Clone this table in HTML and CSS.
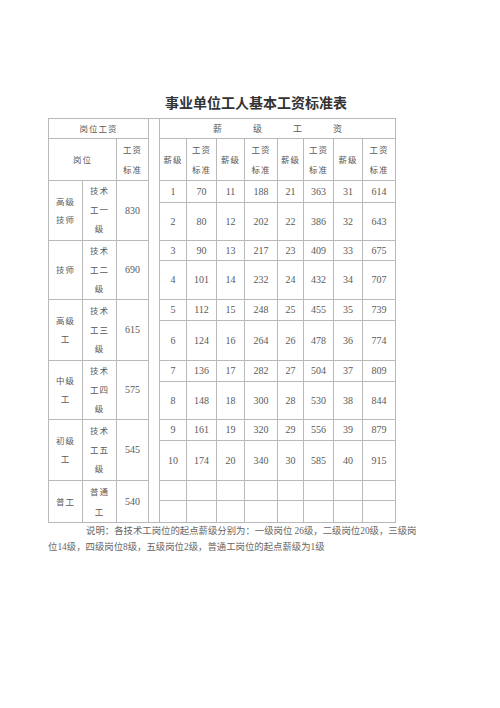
FILE: index.html
```html
<!DOCTYPE html>
<html lang="zh">
<head>
<meta charset="utf-8">
<title>事业单位工人基本工资标准表</title>
<link rel="stylesheet" href="styles.css">
</head>
<body>
<div class="page">
  <h1 class="title">事业单位工人基本工资标准表</h1>
  <table class="wage">
    <colgroup>
      <col class="c1"><col class="c2"><col class="c3"><col class="cg">
      <col class="d1"><col class="d2"><col class="d3"><col class="d4">
      <col class="d5"><col class="d6"><col class="d7"><col class="d8">
    </colgroup>
    <tr class="h1">
      <td colspan="3" class="cn">岗位工资</td>
      <td class="gap" rowspan="14"></td>
      <td colspan="8"><div class="spread"><span>薪</span><span>级</span><span>工</span><span>资</span></div></td>
    </tr>
    <tr class="h2">
      <td colspan="2" class="cn">岗位</td>
      <td class="cn two">工资<br>标准</td>
      <td class="cn">薪级</td><td class="cn two">工资<br>标准</td>
      <td class="cn">薪级</td><td class="cn two">工资<br>标准</td>
      <td class="cn">薪级</td><td class="cn two">工资<br>标准</td>
      <td class="cn">薪级</td><td class="cn two">工资<br>标准</td>
    </tr>
    <tr class="r22">
      <td rowspan="2" class="cn">高级<br>技师</td>
      <td rowspan="2" class="cn three">技术<br>工一<br>级</td>
      <td rowspan="2">830</td>
      <td>1</td><td>70</td><td>11</td><td>188</td><td>21</td><td>363</td><td>31</td><td>614</td>
    </tr>
    <tr class="r38">
      <td>2</td><td>80</td><td>12</td><td>202</td><td>22</td><td>386</td><td>32</td><td>643</td>
    </tr>
    <tr class="r20">
      <td rowspan="2" class="cn">技师</td>
      <td rowspan="2" class="cn three">技术<br>工二<br>级</td>
      <td rowspan="2">690</td>
      <td>3</td><td>90</td><td>13</td><td>217</td><td>23</td><td>409</td><td>33</td><td>675</td>
    </tr>
    <tr class="r39">
      <td>4</td><td>101</td><td>14</td><td>232</td><td>24</td><td>432</td><td>34</td><td>707</td>
    </tr>
    <tr class="r21">
      <td rowspan="2" class="cn">高级<br>工</td>
      <td rowspan="2" class="cn three">技术<br>工三<br>级</td>
      <td rowspan="2">615</td>
      <td>5</td><td>112</td><td>15</td><td>248</td><td>25</td><td>455</td><td>35</td><td>739</td>
    </tr>
    <tr class="r40">
      <td>6</td><td>124</td><td>16</td><td>264</td><td>26</td><td>478</td><td>36</td><td>774</td>
    </tr>
    <tr class="r21">
      <td rowspan="2" class="cn">中级<br>工</td>
      <td rowspan="2" class="cn three">技术<br>工四<br>级</td>
      <td rowspan="2">575</td>
      <td>7</td><td>136</td><td>17</td><td>282</td><td>27</td><td>504</td><td>37</td><td>809</td>
    </tr>
    <tr class="r38">
      <td>8</td><td>148</td><td>18</td><td>300</td><td>28</td><td>530</td><td>38</td><td>844</td>
    </tr>
    <tr class="r21">
      <td rowspan="2" class="cn">初级<br>工</td>
      <td rowspan="2" class="cn three">技术<br>工五<br>级</td>
      <td rowspan="2">545</td>
      <td>9</td><td>161</td><td>19</td><td>320</td><td>29</td><td>556</td><td>39</td><td>879</td>
    </tr>
    <tr class="r40">
      <td>10</td><td>174</td><td>20</td><td>340</td><td>30</td><td>585</td><td>40</td><td>915</td>
    </tr>
    <tr class="r20">
      <td rowspan="2" class="cn">普工</td>
      <td rowspan="2" class="cn two">普通<br>工</td>
      <td rowspan="2">540</td>
      <td></td><td></td><td></td><td></td><td></td><td></td><td></td><td></td>
    </tr>
    <tr class="r22">
      <td></td><td></td><td></td><td></td><td></td><td></td><td></td><td></td>
    </tr>
  </table>
  <p class="note">说明：各技术工岗位的起点薪级分别为：一级岗位 26级，二级岗位20级，三级岗位14级，四级岗位8级，五级岗位2级，普通工岗位的起点薪级为1级</p>
</div>
</body>
</html>
```

FILE: styles.css
```css
html, body {
  margin: 0;
  padding: 0;
  background: #ffffff;
}

.page {
  width: 500px;
  padding-top: 97px;
  font-family: "Liberation Serif", "Noto Sans CJK SC", serif;
  color: #5a5a5a;
}

.title {
  margin: 0 0 7px 0;
  padding-left: 12px;
  text-align: center;
  font-size: 14px;
  line-height: 14px;
  font-weight: bold;
  color: #333333;
  letter-spacing: 0;
}

.wage {
  margin-left: 48px;
  width: 348px;
  table-layout: fixed;
  border-collapse: collapse;
  font-size: 10px;
}

.c1 { width: 34px; }
.c2 { width: 34px; }
.c3 { width: 32px; }
.cg { width: 11px; }
.d1 { width: 27px; }
.d2 { width: 30px; }
.d3 { width: 28px; }
.d4 { width: 33px; }
.d5 { width: 26px; }
.d6 { width: 30px; }
.d7 { width: 29px; }
.d8 { width: 33px; }

.wage td {
  border: 1px solid #b9b9b9;
  padding: 0;
  text-align: center;
  vertical-align: middle;
  line-height: 12px;
  overflow: hidden;
}

.wage td.cn {
  font-size: 8.5px;
  letter-spacing: 1px;
  line-height: 18px;
}

.wage td.two {
  line-height: 20px;
}

.wage td.three {
  line-height: 19px;
}

.wage td.gap {
  border-top: 1px solid #b9b9b9;
  border-bottom: 1px solid #b9b9b9;
}

.spread {
  display: flex;
  justify-content: center;
  gap: 31px;
  font-size: 9px;
}

.h1 { height: 20px; }
.h2 { height: 42px; }
.r20 { height: 20px; }
.r21 { height: 21px; }
.r22 { height: 22px; }
.r38 { height: 38px; }
.r39 { height: 39px; }
.r40 { height: 40px; }

.note {
  margin: 0 0 0 48px;
  width: 374px;
  font-size: 9.4px;
  line-height: 16px;
  text-indent: 38px;
  color: #666666;
}
```
